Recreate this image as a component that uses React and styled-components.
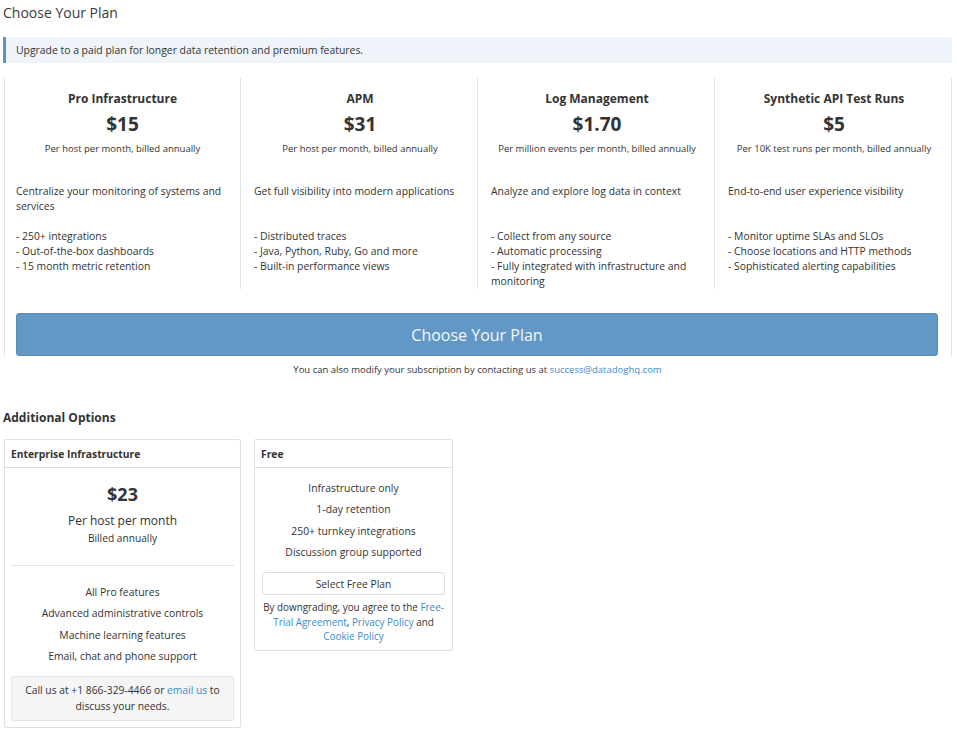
import React from "react";
import styled, { createGlobalStyle } from "styled-components";

const Global = createGlobalStyle`
  html, body { margin: 0; padding: 0; background: #fff; }
  body { font-family: "Open Sans", "Noto Sans", sans-serif; color: #333; }
  * { box-sizing: border-box; }
`;

const Page = styled.div`
  width: 957px;
  padding: 3px 5px 0 3px;
`;

const Title = styled.h1`
  margin: 0;
  font-size: 14px;
  font-weight: 400;
  line-height: 20px;
  color: #3a3a3a;
`;

const Alert = styled.div`
  margin-top: 14px;
  height: 26px;
  display: flex;
  align-items: center;
  padding-left: 10px;
  background: #eef4f9;
  border-left: 3px solid #5b93c2;
  font-size: 10.4px;
  color: #333;
`;

const Plans = styled.section`
  margin: 15px 0 0 1px;
  border-left: 1px solid #e3e3e3;
  border-right: 1px solid #e3e3e3;
  padding-bottom: 1px;
`;

const PlanGrid = styled.div`
  display: grid;
  grid-template-columns: 235px 237px 237px 1fr;
`;

const PlanCol = styled.div`
  padding: 13px 11px 0 ${(p) => (p.$first ? 11 : 13)}px;
  border-left: ${(p) => (p.$first ? "none" : "1px solid #e3e3e3")};
`;

const PlanName = styled.div`
  text-align: center;
  font-size: 12px;
  font-weight: 700;
  line-height: 16px;
  color: #333;
`;

const Price = styled.div`
  text-align: center;
  margin-top: 4px;
  font-size: 19px;
  font-weight: 700;
  line-height: 26px;
  color: #333;
`;

const PriceSub = styled.div`
  text-align: center;
  margin-top: 4px;
  font-size: 9.5px;
  line-height: 16px;
  color: #333;
`;

const Desc = styled.div`
  margin-top: 27px;
  min-height: 45px;
  font-size: 10.4px;
  line-height: 15px;
  color: #333;
`;

const Features = styled.ul`
  list-style: none;
  margin: 0;
  padding: 0;
  font-size: 10.4px;
  line-height: 15px;
  color: #333;
`;

const ButtonWrap = styled.div`
  padding: 24px 13px 0 11px;
`;

const BigButton = styled.button`
  display: block;
  width: 100%;
  height: 43px;
  border: 1px solid #5a8cb8;
  border-radius: 3px;
  background: #6298c5;
  color: #f3f7fb;
  font-family: inherit;
  font-size: 16px;
  cursor: pointer;
`;

const Contact = styled.p`
  margin: 5px 0 0;
  text-align: center;
  font-size: 9.5px;
  line-height: 15px;
  color: #333;
`;

const Link = styled.a`
  color: #3d8bc9;
  text-decoration: none;
`;

const SectionTitle = styled.h2`
  margin: 33px 0 0;
  font-size: 12px;
  font-weight: 700;
  line-height: 16px;
  color: #333;
`;

const Cards = styled.div`
  margin: 13px 0 0 1px;
  display: flex;
  align-items: flex-start;
  gap: 13px;
`;

const Card = styled.div`
  width: ${(p) => p.$w}px;
  border: 1px solid #e0e0e0;
  border-radius: 2px;
  background: #fff;
`;

const CardHeader = styled.div`
  height: 28px;
  display: flex;
  align-items: center;
  padding: 0 6px;
  border-bottom: 1px solid #e0e0e0;
  font-size: 10.3px;
  font-weight: 700;
  color: #333;
`;

const CardBody = styled.div`
  padding: ${(p) => p.$pad};
  text-align: center;
  color: #333;
`;

const CardPrice = styled.div`
  font-size: 18px;
  font-weight: 700;
  line-height: 26px;
`;

const CardPer = styled.div`
  margin-top: 5px;
  font-size: 12px;
  line-height: 18px;
`;

const CardBilled = styled.div`
  font-size: 10.2px;
  line-height: 17px;
`;

const Rule = styled.hr`
  margin: 18px 0 0;
  border: 0;
  border-top: 1px solid #e3e3e3;
`;

const CardList = styled.ul`
  list-style: none;
  margin: ${(p) => p.$m};
  padding: 0;
  font-size: 10.4px;
  line-height: 21.3px;
`;

const Well = styled.div`
  margin-top: 9px;
  padding: 5px 6px 6px;
  background: #f5f5f5;
  border: 1px solid #e6e6e6;
  border-radius: 2px;
  font-size: 10.3px;
  line-height: 16px;
`;

const SmallButton = styled.button`
  display: block;
  width: 100%;
  height: 23px;
  margin-top: 9px;
  border: 1px solid #e0e0e0;
  border-radius: 3px;
  background: #fff;
  color: #333;
  font-family: inherit;
  font-size: 10.3px;
`;

const Fine = styled.p`
  margin: 5px 0 0;
  font-size: 9.9px;
  line-height: 14.5px;
`;

const plans = [
  {
    name: "Pro Infrastructure",
    price: "$15",
    sub: "Per host per month, billed annually",
    desc: "Centralize your monitoring of systems and services",
    features: ["- 250+ integrations", "- Out-of-the-box dashboards", "- 15 month metric retention"],
  },
  {
    name: "APM",
    price: "$31",
    sub: "Per host per month, billed annually",
    desc: "Get full visibility into modern applications",
    features: ["- Distributed traces", "- Java, Python, Ruby, Go and more", "- Built-in performance views"],
  },
  {
    name: "Log Management",
    price: "$1.70",
    sub: "Per million events per month, billed annually",
    desc: "Analyze and explore log data in context",
    features: [
      "- Collect from any source",
      "- Automatic processing",
      "- Fully integrated with infrastructure and monitoring",
    ],
  },
  {
    name: "Synthetic API Test Runs",
    price: "$5",
    sub: "Per 10K test runs per month, billed annually",
    desc: "End-to-end user experience visibility",
    features: [
      "- Monitor uptime SLAs and SLOs",
      "- Choose locations and HTTP methods",
      "- Sophisticated alerting capabilities",
    ],
  },
];

export default function App() {
  return (
    <Page>
      <Global />
      <Title>Choose Your Plan</Title>
      <Alert>Upgrade to a paid plan for longer data retention and premium features.</Alert>
      <Plans>
        <PlanGrid>
          {plans.map((p, i) => (
            <PlanCol key={p.name} $first={i === 0}>
              <PlanName>{p.name}</PlanName>
              <Price>{p.price}</Price>
              <PriceSub>{p.sub}</PriceSub>
              <Desc>{p.desc}</Desc>
              <Features>
                {p.features.map((f) => (
                  <li key={f}>{f}</li>
                ))}
              </Features>
            </PlanCol>
          ))}
        </PlanGrid>
        <ButtonWrap>
          <BigButton>Choose Your Plan</BigButton>
        </ButtonWrap>
      </Plans>
      <Contact>
        You can also modify your subscription by contacting us at{" "}
        <Link href="#">success@datadoghq.com</Link>
      </Contact>
      <SectionTitle>Additional Options</SectionTitle>
      <Cards>
        <Card $w={237}>
          <CardHeader>Enterprise Infrastructure</CardHeader>
          <CardBody $pad="13px 6px 6px">
            <CardPrice>$23</CardPrice>
            <CardPer>Per host per month</CardPer>
            <CardBilled>Billed annually</CardBilled>
            <Rule />
            <CardList $m="16px 0 0">
              <li>All Pro features</li>
              <li>Advanced administrative controls</li>
              <li>Machine learning features</li>
              <li>Email, chat and phone support</li>
            </CardList>
            <Well>
              Call us at +1 866-329-4466 or <Link href="#">email us</Link> to discuss your needs.
            </Well>
          </CardBody>
        </Card>
        <Card $w={199}>
          <CardHeader>Free</CardHeader>
          <CardBody $pad="10px 7px 6px">
            <CardList $m="0">
              <li>Infrastructure only</li>
              <li>1-day retention</li>
              <li>250+ turnkey integrations</li>
              <li>Discussion group supported</li>
            </CardList>
            <SmallButton>Select Free Plan</SmallButton>
            <Fine>
              By downgrading, you agree to the <Link href="#">Free-Trial Agreement</Link>,{" "}
              <Link href="#">Privacy Policy</Link> and <Link href="#">Cookie Policy</Link>
            </Fine>
          </CardBody>
        </Card>
      </Cards>
    </Page>
  );
}
